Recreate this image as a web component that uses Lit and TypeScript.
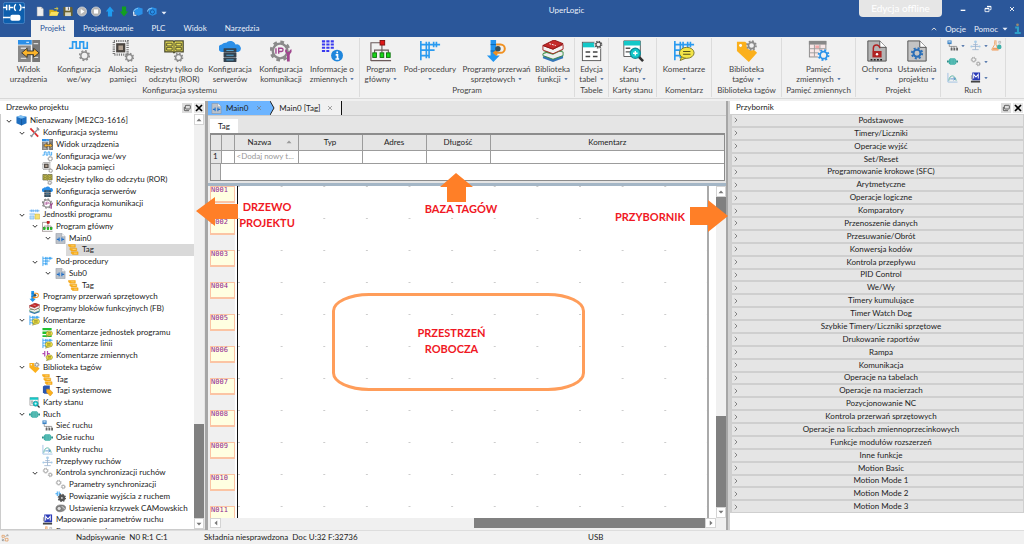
import { LitElement, html, css, svg, nothing } from "lit";
import { customElement, property } from "lit/decorators.js";

const gear = (cx: number, cy: number, r: number, c: string, w = 1.6) => svg`
  <circle cx=${cx} cy=${cy} r=${r} fill="none" stroke=${c} stroke-width=${w}/>
  <circle cx=${cx} cy=${cy} r=${r + w * 0.8} fill="none" stroke=${c} stroke-width=${w}
    stroke-dasharray="${((r + w * 0.8) * Math.PI) / 8} ${((r + w * 0.8) * Math.PI) / 8}"/>`;
const bubble = (x: number, y: number, rx: number, ry: number) => svg`
  <path d="M${x - rx * 0.6} ${y + ry * 0.4}L${x - rx * 0.9} ${y + ry * 1.4}L${x} ${y + ry * 0.9}Z" fill="#f0e040" stroke="#77742c"/>
  <ellipse cx=${x} cy=${y} rx=${rx} ry=${ry} fill="#f3e548" stroke="#77742c"/>
  <path d="M${x - rx * 0.5} ${y - 1.5}h${rx}M${x - rx * 0.5} ${y + 1.5}h${rx}" stroke="#55521c" stroke-width="1.2"/>`;
const ladder = svg`<path d="M2 1v21M2 5h21M2 11h15M2 17h9M8 2v6M11 2v6M16 2v6M19 2v6M8 8v6M11 8v6M8 14v6M11 14v6" fill="none" stroke="#2a9bf0" stroke-width="1.8"/>`;
const tagStack = svg`
  <path d="M1 1h15v6H4L1 4zM4 9h15v6H7l-3-3zM7 17h15v6H10l-3-3z" fill="#fbb01c" stroke="#e89a10"/>
  <path d="M7 4h7M10 12h7M13 20h7" stroke="#fff3c4"/>`;
const docShape = (fill: string) => svg`<path d="M2 1h13l7 7v15H2z" fill=${fill} stroke="#4c4c4c"/><path d="M15 1v7h7" fill="#fff" stroke="#4c4c4c"/>`;
const twoGears = svg`${gear(8, 8, 4, "#9a9a9a", 1.8)}${gear(18, 17, 3, "#9a9a9a", 1.8)}`;

const ICONS: Record<string, unknown> = {
  device: svg`<rect width="15" height="5" y="0" fill="#2b8fe8"/><path d="M9 2.500h3" stroke="#fff"/>
    <rect y="6" width="14" height="18" fill="#888"/><rect x="15.500" y="0" width="8.500" height="24" fill="#787878"/>
    <path d="M17 4h5M17 19h5M3 9h6M3 20h6" stroke="#d8d8d8" stroke-width="1.500"/>
    <path d="M4 14l6-5v3h7V9l6 5-6 5v-3h-7v3z" fill="#fcb42a" stroke="#333"/>`,
  io: svg`<path d="M1 9h4V2h4v7h4V2h4v7h4V2" fill="none" stroke="#2a9bf0" stroke-width="1.800"/>${gear(18, 17, 4, "#8c8c8c", 1.600)}`,
  alloc: svg`<rect x="2" y="1" width="15" height="15" fill="none" stroke="#777" stroke-width="2.600" stroke-dasharray="1.200 1.200"/>
    <rect x="4.500" y="3.500" width="10" height="10" fill="#4a4540"/><rect x="7" y="6" width="5" height="5" fill="#b0a090"/>${gear(19, 19, 3.200, "#8c8c8c", 1.500)}`,
  ror: svg`<path d="M2 1h9l1 1 1-1h9v12h-9l-1 1-1-1H2z" fill="#e9df55" stroke="#4a4a30" stroke-width="1.400"/>
    <path d="M12 2v11M4 3.500h6v3H4zM4 8h6v3H4zM14 3.500h6v3h-6zM14 8h6v3h-6z" fill="none" stroke="#4a4a30"/><circle cx="17" cy="19" r="5.500" fill="#f1f1f1"/>${gear(17, 19, 3.200, "#8c8c8c", 1.500)}`,
  server: svg`<path d="M4 13a4 4 0 01-1-8 5 5 0 015-2 6 6 0 0110 2 4 4 0 013 8z" fill="#2b8fe8"/>
    <rect x="5" y="9" width="14" height="4.800" rx="0.500" fill="#34424f"/><rect x="5" y="14.200" width="14" height="4.800" rx="0.500" fill="#34424f"/><rect x="5" y="19.400" width="14" height="4.600" rx="0.500" fill="#34424f"/>
    <path d="M8 11.400h8M8 16.600h8M8 21.700h8" stroke="#58b5e8"/>`,
  comm: svg`<circle cx="11" cy="12" r="8" fill="none" stroke="#8a8a8a" stroke-width="2.600"/><circle cx="11" cy="12" r="10" fill="none" stroke="#8a8a8a" stroke-width="2.800" stroke-dasharray="4 3.850"/>
    <path d="M6.500 9v6M9.500 15V9h3a1.500 1.500 0 010 3.500h-3" fill="none" stroke="#a0468e" stroke-width="1.500"/>
    <path d="M16.500 10v3l2 2.500v8h3v-8l2-2.500v-3l-2 1v2h-3v-2z" fill="#a0468e"/>`,
  info: svg`<path d="M1 1.500h13M1 5h13M1 8.500h13M1 12h8" stroke="#3a3af0" stroke-width="2.200" stroke-dasharray="3.500 1.300"/>
    <circle cx="17.500" cy="17" r="6.500" fill="#1f86dc"/><path d="M17.700 12.500v2M16 16.200h2v4.500M15.800 20.700h4" stroke="#fff" stroke-width="1.800" fill="none"/>`,
  prog: svg`<path d="M13 5v6M5 14v-3h15v3M13 11v3M1 23V3h10M1 22.500h22" fill="none" stroke="#6a5a5a" stroke-width="1.200"/>
    <rect x="11" y="0.500" width="5" height="5" fill="#e01818" stroke="#801010"/>
    <rect x="3" y="14" width="4" height="5" fill="#17d817" stroke="#0a700a"/><rect x="11" y="14" width="4" height="5" fill="#17d817" stroke="#0a700a"/><rect x="18" y="14" width="4" height="5" fill="#17d817" stroke="#0a700a"/>`,
  sub: ladder,
  intr: svg`<path d="M5 0h6v17h4l-7 7-7-7h4z" fill="#2196f0"/><path d="M5 5h6M5 12h6" stroke="#0c62a8"/>
    <path d="M11 5h5a4.500 4.500 0 010 9h-5M12 11.500l-3 2.500 3 2.500" fill="none" stroke="#f09020" stroke-width="2.200"/><circle cx="13" cy="9.500" r="3" fill="#34505c"/>`,
  books: svg`<path d="M1 18l12-4 10 3v3l-11 4-11-4z" fill="#3476b8"/><path d="M1 15l12-4 10 2v4l-11 4-11-4z" fill="#eee" stroke="#3a8a45"/><path d="M1 13l12-4 10 2-11 5z" fill="#3f9a4c"/>
    <path d="M1 6v5l11 4 11-5V5L12 10z" fill="#f2f2f2" stroke="#a82020"/><path d="M1 6L13 0l10 4-11 6z" fill="#c42a2a" stroke="#8c1414"/><path d="M8 4l7 2" stroke="#fff" stroke-dasharray="2 1"/>`,
  table: svg`<rect x="1.500" y="2.500" width="20" height="20" fill="#fff" stroke="#555"/><rect x="2" y="3" width="19" height="5" fill="#14c8c8"/>
    <path d="M5 13h5M13 13h5M5 18h5M13 18h5" stroke="#444" stroke-width="1.600"/><circle cx="19" cy="5" r="5" fill="#f1f1f1"/>${gear(19, 5, 2.600, "#555", 1.300)}`,
  card: svg`<path d="M2 1h18v17H2z" fill="#fff" stroke="#555"/><rect x="2" y="1" width="18" height="5" fill="#14c8c8"/><path d="M4 9h5M4 13h5" stroke="#555" stroke-width="1.500"/>
    <path d="M18 18l5 5" stroke="#333" stroke-width="2.800"/><circle cx="14.500" cy="14.500" r="5.500" fill="#14c8c8" stroke="#0d8c98" stroke-width="1.400"/><path d="M14.500 12v5M12 14.500h5" stroke="#fff" stroke-width="1.500"/>`,
  comment: svg`${ladder}${bubble(15, 14, 8, 6)}`,
  taglib: svg`<path d="M1 2h9l13 12-9 10L1 12z" fill="#fbb01c"/><circle cx="5" cy="6" r="1.600" fill="#fff"/><circle cx="17" cy="6" r="5.500" fill="#f1f1f1"/>${gear(17, 6, 3.400, "#8a8a8a", 1.800)}`,
  mem: svg`<rect x="1.500" y="1.500" width="18" height="17" fill="#f8e8e8" stroke="#888"/><rect x="1" y="1" width="19" height="4" fill="#888"/>
    <path d="M7 5v13M13 5v13M2 9.500h17M2 14h17" stroke="#999"/><path d="M8 6h4v3H8zM14 10h4v3h-4z" fill="#f2a8a8"/><circle cx="17" cy="16.500" r="6.500" fill="#f1f1f1"/>${gear(17, 16.500, 3.800, "#2a93ea", 2)}`,
  lockdoc: svg`${docShape("#b4b4b4")}<path d="M8 12V9a3.500 3.500 0 017 0" fill="none" stroke="#b02020" stroke-width="1.600"/><rect x="7" y="12" width="10" height="7" fill="#b02424"/><circle cx="12" cy="15.500" r="1.300" fill="#fff"/><path d="M5 21.500h14" stroke="#222" stroke-width="1.600" stroke-dasharray="2 1.500"/>`,
  geardoc: svg`${docShape("#c4c4c4")}${gear(12, 14.500, 3.800, "#2a6fb8", 2.200)}`,
  net: svg`<rect x="1" y="1" width="9" height="8" fill="#3b82c4"/><rect x="3" y="2.500" width="5" height="3" fill="#bcd8f0"/><path d="M5 9v5h16M10 14v3M15 14v3M21 14v3" fill="none" stroke="#777" stroke-width="1.500"/><path d="M8 17h4v6H8zM14 17h4v6h-4zM20 17h4v6h-4z" fill="#666"/>`,
  axis: svg`<path d="M0 10h4v4H0zM20 10h4v4h-4z" fill="#2c8c88"/><path d="M4 8l3-3h10l3 3v8l-3 3H7l-3-3z" fill="#3fb0a8"/><path d="M9 6v12M13 6v12M17 6v12" stroke="#8fd4cf"/>`,
  points: svg`<path d="M2 2v20h21" fill="none" stroke="#8ab4e0" stroke-width="1.600"/><path d="M4 19c1-14 14-14 16 0" fill="none" stroke="#30a090" stroke-width="1.600"/><path d="M7 15h10M14 12l4 3-4 3" fill="none" stroke="#3b82c4" stroke-width="1.600"/>`,
  flow: svg`<circle cx="12" cy="4" r="3" fill="#a8cce8"/><path d="M12 7v14M3 14h18M7 10h10M5 21h14" stroke="#9cb4d0" stroke-width="1.800"/><circle cx="3" cy="14" r="2.200" fill="#a8cce8"/><circle cx="21" cy="14" r="2.200" fill="#a8cce8"/>`,
  gears: twoGears,
  flask: svg`<path d="M7 2h5M8 3v7L2 20v2h14l-5-12V3" fill="none" stroke="#f0a060" stroke-width="2"/><path d="M5 17h8l2 4H3z" fill="#f0a060"/><path d="M17 3h4v4h-4z" fill="none" stroke="#888"/><circle cx="18" cy="15" r="5" fill="#3fb0a8"/>`,
  motor: svg`<path d="M5 1h17v17H5z" fill="#2a3ab8"/><path d="M8 14V5l5 6 5-6v9" fill="none" stroke="#fff" stroke-width="2.200"/><path d="M2 19h20v4H2z" fill="#444"/><path d="M2 7h3v9H2z" fill="#aaa"/>`,
  cube: svg`<path d="M1 4l9-3 13 3v14l-11 5L1 18z" fill="#1f6fc0"/><path d="M1 4l11 4 11-4-13-3z" fill="#7ec0f4"/><path d="M12 8v15" stroke="#0c3f78"/>`,
  tools: svg`<path d="M3 3l17 18" stroke="#e03030" stroke-width="4"/><path d="M21 3L5 20" stroke="#8c949c" stroke-width="3"/><path d="M17 1l5 6M3 18l4 4" stroke="#8c949c" stroke-width="3"/>`,
  units: svg`<path d="M1 4h22M1 11h12M5 1v6M9 1v6M15 1v6M19 1v6" stroke="#58a8f0" stroke-width="1.800"/><path d="M2 15h9v7H2z" fill="#b8dcf8" stroke="#58a8f0"/><path d="M13 11h10v11H13z" fill="#f4e070" stroke="#c8a830"/>`,
  ladderdoc: svg`<path d="M2 1h13l7 7v15H2z" fill="#bcc2ca" stroke="#858b94"/><path d="M15 1v7h7" fill="#fff" stroke="#858b94"/><path d="M4 14h5M15 14h5M9 10v8M15 10v8" stroke="#1f6fc8" stroke-width="2.400"/>`,
  tag: tagStack,
  kunit: svg`<path d="M1 2h20v5H1zM1 10h14v5H1zM1 18h20v4H1z" fill="#20c030"/>${bubble(16, 14, 7, 5.500)}`,
  kvar: svg`<path d="M1 8h5M12 8h5M6 2v12M12 2v12" stroke="#b048b0" stroke-width="2.600"/>${bubble(16, 16, 7, 5.500)}`,
  tagsys: svg`<path d="M2 3l3-2h12v18H5l-3-3z" fill="#2a56b0"/><path d="M10 9h6l8 8-6 7-8-8z" fill="#fbb01c" stroke="#d98c0a"/>`,
  link: svg`<path d="M1 6h4M9 6h4M5 1v10M9 1v10" stroke="#2a9bf0" stroke-width="2"/><circle cx="15" cy="15" r="6" fill="#555"/>${gear(15, 15, 6, "#555", 2.400)}<circle cx="15" cy="15" r="2" fill="#ddd"/>`,
  cam: svg`<path d="M2 12c0-8 10-9 17-7 6 2 5 9 0 12-8 4-17 2-17-5z" fill="#8a8a8a" stroke="#555"/><circle cx="9" cy="12" r="4.500" fill="#ddd" stroke="#444"/><path d="M15 7l6 6" stroke="#ddd" stroke-width="2"/>`,
  logo: svg`<rect x="0.500" y="0.500" width="23" height="23" rx="2" fill="#0d5fae" stroke="#4a84c4"/><path d="M0 6h4M4 3v6M7 3v6M7 6h4M14 2.500a4.500 4.500 0 000 7M18 2.500a4.500 4.500 0 010 7M21 6h3M0 17h8" fill="none" stroke="#fff" stroke-width="1.600"/><rect x="8" y="14" width="11" height="6.500" rx="2" fill="#fff"/>`,
  newdoc: svg`<path d="M5 1h10l5 5v17H5z" fill="#eee" stroke="#aaa"/><path d="M15 1v5h5" fill="#bbb"/>`,
  open: svg`<path d="M1 8h9l2 2h8v12H1z" fill="#d8b018"/><path d="M5 13h19l-4 9H1z" fill="#f8e060"/><path d="M13 5h8M18 2l4 3-4 3" stroke="#f0d838" stroke-width="2" fill="none"/>`,
  save: svg`<path d="M1 1h20l2 2v20H1z" fill="#6a6230"/><rect x="6" y="1" width="11" height="9" fill="#e8e8e8"/><rect x="5" y="14" width="14" height="9" fill="#d8d8c0"/><path d="M13 2v6" stroke="#444" stroke-width="2"/>`,
  play: svg`<circle cx="12" cy="12" r="11" fill="#b8b8b8" stroke="#e4e4e4" stroke-width="1.500"/><path d="M9 6l9 6-9 6z" fill="#fff"/>`,
  stop: svg`<circle cx="12" cy="12" r="11" fill="#b0b0b0" stroke="#e4e4e4" stroke-width="1.500"/><rect x="7" y="7" width="10" height="10" fill="#fff"/>`,
  up: svg`<path d="M12 0l10 12h-5v12H7V12H2z" fill="#1f9cf0"/>`,
  down: svg`<path d="M12 24l10-12h-5V0H7v12H2z" fill="#12a020"/>`,
  cloudA: svg`<path d="M4 6l8-4 11 3v13l-10 4-9-4z" fill="#2a90e8"/><path d="M1 18a11 11 0 0111-13" fill="none" stroke="#7cc0f4" stroke-width="2.500"/><path d="M2 13v8h6" stroke="#fff" stroke-width="2.500" fill="none"/>`,
  cloudB: svg`<path d="M4 6l8-4 11 3v13l-10 4-9-4z" fill="#2a90e8"/><circle cx="13" cy="13" r="5" fill="none" stroke="#134f94" stroke-width="2"/><path d="M1 12a11 11 0 0111-8" fill="none" stroke="#7cc0f4" stroke-width="2.500"/>`,
  float: svg`<rect x="7" y="4" width="15" height="11" rx="2" fill="none" stroke="#444" stroke-width="2.400"/><path d="M4 9v9a2 2 0 002 2h12" fill="none" stroke="#444" stroke-width="2.400"/>`,
  close: svg`<path d="M3 3l18 18M21 3L3 21" stroke="#000" stroke-width="5"/>`,
  thinx: svg`<path d="M4 4l16 16M20 4L4 20" stroke="currentColor" stroke-width="2.600"/>`,
  min: svg`<path d="M5 16h14" stroke="#fff" stroke-width="4"/>`,
  restore: svg`<path d="M9 4h12v10h-4M3 10h12v10H3z" fill="none" stroke="#fff" stroke-width="2.500"/><path d="M9 5h12M3 11h12" stroke="#fff" stroke-width="4"/>`,
  winx: svg`<path d="M4 4l16 16M20 4L4 20" stroke="#fff" stroke-width="3.600"/>`,
  i: svg`<path d="M7 10h6v12M6 22h13" fill="none" stroke="#2f9fc8" stroke-width="4.500"/><circle cx="12" cy="4" r="3" fill="#9a8a70"/>`,
  chevD: svg`<path d="M3 8l9 9 9-9" fill="none" stroke="#333" stroke-width="4"/>`,
  chevR: svg`<path d="M7 3l9 9-9 9" fill="none" stroke="#777" stroke-width="3.500"/>`,
  chevU: svg`<path d="M3 16l9-8 9 8" fill="none" stroke="#ddd" stroke-width="4"/>`,
  triD: svg`<path d="M2 7h20L12 18z" fill="currentColor"/>`,
  triU: svg`<path d="M2 17h20L12 6z" fill="currentColor"/>`,
  triL: svg`<path d="M17 2v20L6 12z" fill="currentColor"/>`,
  triR: svg`<path d="M7 2v20l11-10z" fill="currentColor"/>`,
  status: svg`<path d="M3 4h7v6H3zM13 13h8v8h-8z" fill="none" stroke="#e0904c" stroke-width="2"/><path d="M13 9l7-7M4 20l6-6M17 3h4v4M4 14v6h6" stroke="#8a8a8a" stroke-width="2" fill="none"/>`,
};

const icon = (name: string, cls = "i11") =>
  html`<svg class=${cls} viewBox="0 0 24 24" aria-hidden="true">${ICONS[name]}</svg>`;

type Cmd = { icon: string; a: string; b?: string; menu?: boolean; w: number };
const RIBBON: { title: string; items: Cmd[] }[] = [
  { title: "Konfiguracja systemu", items: [
    { icon: "device", a: "Widok", b: "urządzenia", w: 53 },
    { icon: "io", a: "Konfiguracja", b: "we/wy", w: 48 },
    { icon: "alloc", a: "Alokacja", b: "pamięci", w: 40 },
    { icon: "ror", a: "Rejestry tylko do", b: "odczytu (ROR)", w: 62 },
    { icon: "server", a: "Konfiguracja", b: "serwerów", w: 50 },
    { icon: "comm", a: "Konfiguracja", b: "komunikacji", w: 52 },
    { icon: "info", a: "Informacje o", b: "zmiennych", menu: true, w: 50 }] },
  { title: "Program", items: [
    { icon: "prog", a: "Program", b: "główny", menu: true, w: 38 },
    { icon: "sub", a: "Pod-procedury", menu: true, w: 60 },
    { icon: "intr", a: "Programy przerwań", b: "sprzętowych", menu: true, w: 73 },
    { icon: "books", a: "Biblioteka", b: "funkcji", menu: true, w: 39 }] },
  { title: "Tabele", items: [{ icon: "table", a: "Edycja", b: "tabel", menu: true, w: 29 }] },
  { title: "Karty stanu", items: [{ icon: "card", a: "Karty", b: "stanu", menu: true, w: 43 }] },
  { title: "Komentarz", items: [{ icon: "comment", a: "Komentarze", menu: true, w: 50 }] },
  { title: "Biblioteka tagów", items: [{ icon: "taglib", a: "Biblioteka", b: "tagów", menu: true, w: 65 }] },
  { title: "Pamięć zmiennych", items: [{ icon: "mem", a: "Pamięć", b: "zmiennych", menu: true, w: 69 }] },
  { title: "Projekt", items: [
    { icon: "lockdoc", a: "Ochrona", menu: true, w: 38 },
    { icon: "geardoc", a: "Ustawienia", b: "projektu", menu: true, w: 42 }] },
];

const TREE: [number, string, string, boolean?][] = [
  [0, "cube", "Nienazwany [ME2C3-1616]", true],
  [1, "tools", "Konfiguracja systemu", true],
  [2, "device", "Widok urządzenia"],
  [2, "io", "Konfiguracja we/wy"],
  [2, "alloc", "Alokacja pamięci"],
  [2, "ror", "Rejestry tylko do odczytu (ROR)"],
  [2, "server", "Konfiguracja serwerów"],
  [2, "comm", "Konfiguracja komunikacji"],
  [1, "units", "Jednostki programu", true],
  [2, "prog", "Program główny", true],
  [3, "ladderdoc", "Main0", true],
  [4, "tag", "Tag"],
  [2, "sub", "Pod-procedury", true],
  [3, "ladderdoc", "Sub0", true],
  [4, "tag", "Tag"],
  [1, "intr", "Programy przerwań sprzętowych"],
  [1, "books", "Programy bloków funkcyjnych (FB)"],
  [1, "comment", "Komentarze", true],
  [2, "kunit", "Komentarze jednostek programu"],
  [2, "comment", "Komentarze linii"],
  [2, "kvar", "Komentarze zmiennych"],
  [1, "taglib", "Biblioteka tagów", true],
  [2, "tag", "Tag"],
  [2, "tagsys", "Tagi systemowe"],
  [1, "card", "Karty stanu"],
  [1, "axis", "Ruch", true],
  [2, "net", "Sieć ruchu"],
  [2, "axis", "Osie ruchu"],
  [2, "points", "Punkty ruchu"],
  [2, "flow", "Przepływy ruchów"],
  [2, "gears", "Kontrola synchronizacji ruchów", true],
  [3, "gears", "Parametry synchronizacji"],
  [3, "link", "Powiązanie wyjścia z ruchem"],
  [3, "cam", "Ustawienia krzywek CAMowskich"],
  [2, "motor", "Mapowanie parametrów ruchu"],
  [2, "flask", "Parametry ruchu"],
];

const TOOLBOX = [
  "Podstawowe", "Timery/Liczniki", "Operacje wyjść", "Set/Reset", "Programowanie krokowe (SFC)", "Arytmetyczne",
  "Operacje logiczne", "Komparatory", "Przenoszenie danych", "Przesuwanie/Obrót", "Konwersja kodów",
  "Kontrola przepływu", "PID Control", "We/Wy", "Timery kumulujące", "Timer Watch Dog",
  "Szybkie Timery/Liczniki sprzętowe", "Drukowanie raportów", "Rampa", "Komunikacja", "Operacje na tabelach",
  "Operacje na macierzach", "Pozycjonowanie NC", "Kontrola przerwań sprzętowych",
  "Operacje na liczbach zmiennoprzecinkowych", "Funkcje modułów rozszerzeń", "Inne funkcje", "Motion Basic",
  "Motion Mode 1", "Motion Mode 2", "Motion Mode 3",
];

const base = css`
  * { box-sizing: border-box; }
  button { font: inherit; color: inherit; background: none; border: 0; padding: 0; margin: 0; }
  a { color: inherit; text-decoration: none; }
  svg { display: block; flex: none; }
  .i6 { width: 6px; height: 6px; }
  .i8 { width: 8px; height: 8px; }
  .i11 { width: 11px; height: 11px; }
  .i22 { width: 22px; height: 22px; }
`;

@customElement("ribbon-bar")
export class RibbonBar extends LitElement {
  static styles = [base, css`
    :host { display: flex; height: 62px; background: #f1f1f1; border-bottom: 1px solid #d8d8d8; color: #444; }
    .group { display: flex; flex-direction: column; align-items: center; border-right: 1px solid #dcdcdc; padding: 2px 2px 0; margin: 1px 0; }
    .cmds { display: flex; flex: 1; }
    .cmd { display: flex; flex-direction: column; align-items: center; line-height: 10px; white-space: nowrap; }
    .cmd svg.i22 { margin-bottom: 2px; }
    .line { display: flex; align-items: center; gap: 3px; height: 10px; }
    .arrow { color: #2b579a; width: 4px; height: 4px; }
    .title { line-height: 11px; padding-bottom: 1px; white-space: nowrap; }
    .small { display: grid; grid-template-columns: 23px 21px 12px; align-content: start; row-gap: 5px; padding-left: 4px; }
    .small button { display: flex; align-items: center; gap: 3px; height: 11px; }
  `];
  render() {
    const small = [["net", 1], ["flow", 1], ["flask", 0], ["axis", 0], ["gears", 1], ["", 0], ["points", 0], ["motor", 1]] as const;
    return html`
      ${RIBBON.map((g) => html`<div class="group">
        <div class="cmds">${g.items.map((c) => html`
          <button class="cmd" style="width:${c.w}px">${icon(c.icon, "i22")}
            <span class="line">${c.a}</span>
            <span class="line">${c.b ?? nothing}${c.menu ? icon("triD", "arrow") : nothing}</span>
          </button>`)}</div>
        <div class="title">${g.title}</div>
      </div>`)}
      <div class="group">
        <div class="cmds"><div class="small">${small.map(([n, m]) => n
          ? html`<button aria-label=${n}>${icon(n)}${m ? icon("triD", "arrow") : nothing}</button>`
          : html`<span></span>`)}</div></div>
        <div class="title">Ruch</div>
      </div>`;
  }
}

@customElement("dock-header")
export class DockHeader extends LitElement {
  static styles = [base, css`
    :host { display: flex; align-items: center; height: 13px; background: #fff; padding: 0 1px 0 6px; gap: 2px; }
    span { flex: 1; }
    button { background: #ddd; padding: 1px; }
    button:last-child { background: #e8e8e8; }
  `];
  @property() label = "";
  render() {
    return html`<span>${this.label}</span>
      <button aria-label="Odepnij">${icon("float", "i8")}</button>
      <button aria-label="Zamknij">${icon("close", "i8")}</button>`;
  }
}

@customElement("project-tree")
export class ProjectTree extends LitElement {
  static styles = [base, css`
    :host { display: flex; min-height: 0; overflow: hidden; background: #fff; border-left: 1px solid #ccc; }
    ul { list-style: none; margin: 0; padding: 1px 0 0; flex: 1; height: 102%; display: flex; flex-direction: column; }
    li { flex: 1 1 0; min-height: 0; display: flex; align-items: center; padding-left: calc(var(--level) * 13px + 5px); white-space: nowrap; }
    .twist { width: 8px; display: flex; }
    .label { display: flex; align-items: center; align-self: stretch; gap: 3px; flex: 1; padding-left: 2px; }
    .sel .label { background: #d9d9d9; }
  `];
  render() {
    return html`<ul role="tree">${TREE.map(([lv, ic, text, open], n) => html`
      <li role="treeitem" class=${n === 11 ? "sel" : ""} style="--level:${lv}">
        <span class="twist">${open ? icon("chevD", "i6") : nothing}</span>
        <span class="label">${icon(ic)}${text}</span>
      </li>`)}</ul>`;
  }
}

@customElement("tool-box")
export class ToolBox extends LitElement {
  static styles = [base, css`
    :host { display: block; background: #fff; min-height: 0; overflow: hidden; }
    .list { height: 96%; display: flex; flex-direction: column; background: #cfcfcf; padding: 0 1px 0 2px; }
    button { flex: 1 1 0; min-height: 0; display: flex; align-items: center; background: #e5e5e5; border: solid #cfcfcf; border-width: 1px 0; padding-left: 1px; }
    button span { flex: 1; text-align: center; }
  `];
  render() {
    return html`<div class="list">${TOOLBOX.map((t) => html`<button>${icon("chevR", "i6")}<span>${t}</span></button>`)}</div>`;
  }
}

@customElement("scroll-strip")
export class ScrollStrip extends LitElement {
  static styles = [base, css`
    :host { display: flex; flex-direction: column; width: 10px; background: #f0f0f0; color: #777; }
    :host([horizontal]) { flex-direction: row; width: auto; height: 10px; }
    button { flex: none; width: 10px; height: 11px; display: flex; align-items: center; justify-content: center; background: #fff; border: 1px solid #d4d4d4; }
    :host([horizontal]) button { height: 10px; width: 11px; }
    .part { flex: 1 1 0; }
    .dark { background: #808080; }
  `];
  @property({ type: Boolean, reflect: true }) horizontal = false;
  @property({ attribute: false }) parts: number[] = [];
  render() {
    return html`<button aria-label="Wstecz">${icon(this.horizontal ? "triL" : "triU", "i6")}</button>
      ${this.parts.map((p) => html`<div class="part ${p < 0 ? "dark" : ""}" style="flex-grow:${Math.abs(p)}"></div>`)}
      <button aria-label="Dalej">${icon(this.horizontal ? "triR" : "triD", "i6")}</button>`;
  }
}

@customElement("work-area")
export class WorkArea extends LitElement {
  static styles = [base, css`
    :host { display: flex; flex-direction: column; min-width: 0; min-height: 0; background: #e5e5e5; border: solid #a6a6a6; border-width: 0 2px 0 3px; }
    .docs { display: flex; height: 15px; border-bottom: 1px solid #ccc; }
    .doc { display: flex; align-items: center; gap: 6px; padding: 0 8px 0 4px; color: #222; }
    .doc svg { color: #777; }
    .doc.on { background: #6cb4ff; gap: 4px; padding: 0 8px 0 3px; }
    .doc.on .i6 { margin-left: 4px; }
    .edge { width: 5px; height: 14px; background: #f1f1f1; }
    .doc.off { background: #f1f1f1; border-right: 1px solid #111; }
    .tags { padding: 3px 1px 2px 2px; }
    .sheet { background: #fff; width: 28px; line-height: 14px; text-align: center; }
    .grid { background: #fff; border: 1px solid #8c8c8c; border-top-width: 2px; height: 48px; display: flex; flex-direction: column; }
    table { border-collapse: collapse; table-layout: fixed; width: 100%; }
    th, td { border: 1px solid #9c9c9c; padding: 0 2px; font-weight: normal; overflow: hidden; white-space: nowrap; }
    th { background: #e5e5e5; height: 15px; color: #222; }
    td { height: 13px; color: #999; }
    tr > :first-child { border-left: 0; }
    tr > :last-child { border-right: 0; }
    thead th { border-top: 0; }
    .head { display: flex; align-items: center; justify-content: space-between; padding: 0 4px 0 11px; color: #222; }
    .head svg { color: #999; }
    .c1 { width: 10px; } .c2 { width: 13px; } .c3 { width: 64px; }
    td.num { background: #e5e5e5; color: #222; }
    .rest { width: 10px; flex: 1; background: #e5e5e5; border-right: 1px solid #9c9c9c; }
    .split { height: 3px; background: #a4b6c6; }
    .body { flex: 1; min-height: 0; display: grid; grid-template-columns: 1fr 10px; grid-template-rows: 1fr 10px; background: #f0f0f0; padding: 0 0 2px 2px; }
    .rungs { display: flex; flex: 1; min-height: 0; overflow: hidden; background: #fff; padding-right: 7px; }
    .gutter { width: 25px; background: #f0f0f0; height: 100%; }
    .gutter div { height: 32px; }
    .gutter span { display: block; height: 17px; border: 1px solid #fbc4a4; border-bottom-width: 2px; background: #ffffe1; color: #902890; line-height: 7px; font-family: "DejaVu Sans Mono", monospace; font-size: 7px; }
    .ladder { flex: 1; margin-left: 2px; border-left: 1px solid #111; border-right: 2px solid #aaa; }
    .dots { height: 100%; background-image: linear-gradient(to right, #ccc 2px, transparent 2px);
      background-size: calc(100% / 11) 32px; position: relative; }
    .dots::after { content: ""; position: absolute; inset: 0; background: repeating-linear-gradient(transparent 0 1px, #fff 1px 32px); }
    .note, .room { position: absolute; font: bold 11px/16px Lato, sans-serif; color: #f01824; text-align: center; }
    .n1 { left: 0; top: 13px; width: 58px; }
    .n2 { left: 178px; top: 15px; width: 90px; }
    .n3 { right: 22px; top: 23px; width: 76px; }
    .room { left: 94px; top: 107px; width: 253px; height: 98px; border: 3px solid #ff9d5a; border-radius: 37px / 18px; display: flex; align-items: center; justify-content: center; padding: 0 14px 3px 0; }
    .ptr { position: absolute; fill: #ff7f27; }
    .p1 { left: -42px; top: 11px; width: 42px; height: 29px; }
    .p2 { left: 202px; top: -13px; width: 33px; height: 29px; }
    .p3 { right: -18px; top: 14px; width: 38px; height: 32px; }
    .over { position: relative; display: flex; min-height: 0; }
    .marks { position: absolute; left: 28px; right: 6px; top: 0; height: 0; }
  `];
  render() {
    const nums = Array.from({ length: 11 }, (_, n) => "N" + String(n + 1).padStart(3, "0"));
    return html`
      <div class="docs">
        <button class="doc on">${icon("ladderdoc")}Main0 ${icon("thinx", "i6")}</button>
        <svg class="edge" viewBox="0 0 5 14"><path d="M0 0l4 7-4 7z" fill="#6cb4ff"/><path d="M0 0l4 7-4 7" fill="none" stroke="#222"/></svg>
        <button class="doc off">Main0 [Tag] ${icon("thinx", "i6")}</button>
      </div>
      <div class="tags">
        <div class="sheet">Tag</div>
        <div class="grid">
          <table>
            <colgroup><col class="c1"><col class="c2"><col class="c3"><col class="c3"><col class="c3"><col class="c3"><col></colgroup>
            <thead><tr><th></th><th></th><th><span class="head">Nazwa ${icon("triU", "i6")}</span></th><th>Typ</th><th>Adres</th><th>Długość</th><th>Komentarz</th></tr></thead>
            <tbody><tr><td class="num">1</td><td></td><td>&lt;Dodaj nowy t...</td><td></td><td></td><td></td><td></td></tr></tbody>
          </table>
          <div class="rest"></div>
        </div>
      </div>
      <div class="split"></div>
      <div class="body">
        <div class="over">
          <div class="rungs">
            <div class="gutter">${nums.map((n) => html`<div><span>${n}</span></div>`)}</div>
            <div class="ladder"><div class="dots"></div></div>
          </div>
          <div class="marks">
            <div class="note n1">DRZEWO PROJEKTU</div>
            <div class="note n2">BAZA TAGÓW</div>
            <div class="note n3">PRZYBORNIK</div>
            <div class="room">PRZESTRZEŃ<br>ROBOCZA</div>
            <svg class="ptr p1" viewBox="0 0 42 29"><path d="M0 14L19 0v7h23v15H19v7z"/></svg>
            <svg class="ptr p2" viewBox="0 0 33 29"><path d="M16 0l17 14h-7v15H7V14H0z"/></svg>
            <svg class="ptr p3" viewBox="0 0 38 32"><path d="M0 7h18V0l20 16-20 16v-7H0z"/></svg>
          </div>
        </div>
        <scroll-strip .parts=${[-18, 200, -90]}></scroll-strip>
        <scroll-strip horizontal .parts=${[252, -231]}></scroll-strip>
      </div>`;
  }
}

@customElement("app-root")
export class AppRoot extends LitElement {
  static styles = [base, css`
    :host { display: flex; flex-direction: column; height: 100vh; overflow: hidden; background: #f0f0f0; color: #222; font: 8px/11px Lato, "Open Sans", sans-serif; }
    header { background: #2b579a; color: #e8eef8; display: grid; grid-template-columns: 31px 1fr; }
    .logo { padding: 2px 3px; }
    .bars { display: flex; flex-direction: column; }
    .top { display: grid; grid-template-columns: 1fr auto 1fr; height: 20px; }
    .quick { display: flex; gap: 4px; padding: 3px 0 0 4px; }
    .quick .i11 { width: 10px; }
    .quick .i6 { margin-top: 3px; }
    .name { padding: 5px 0 0 78px; }
    .sys { display: flex; justify-content: flex-end; gap: 17px; padding-right: 9px; }
    .sys button { height: 17px; }
    .badge { background: #e6e6e6; color: #fff; border-radius: 0 0 4px 4px; width: 83px; height: 17px; text-align: center; font-size: 10px; line-height: 17px; }
    nav { display: flex; height: 17px; align-items: stretch; line-height: 16px; }
    nav a { padding: 0 9px; }
    nav .on { background: #f1f1f1; color: #2b579a; }
    .right { margin-left: auto; display: flex; align-items: center; gap: 4px; padding-right: 1px; }
    .right a { padding: 0 0 0 4px; }
    main { flex: 1; min-height: 0; display: grid; grid-template-columns: 205px 1fr 296px; padding-top: 2px; }
    .dock { display: flex; flex-direction: column; min-height: 0; min-width: 0; }
    .dock tool-box { flex: 1; }
    .row { display: flex; flex: 1; min-height: 0; border-bottom: 1px solid #ccc; padding-right: 1px; background: #e5e5e5; }
    .row project-tree { flex: 1; }
    .right-dock { border-left: 2px solid #d0d0d0; }
    footer { display: flex; align-items: center; height: 14px; background: #f1f1f1; border-top: 1px solid #ddd; }
    .s1 { width: 76px; } .s2 { width: 128px; } .s3 { width: 384px; }
    .s1 svg { margin-left: 1px; }
  `];
  render() {
    return html`
      <header>
        <div class="logo">${icon("logo", "i22")}</div>
        <div class="bars">
          <div class="top">
            <div class="quick">${["newdoc", "open", "save", "play", "stop", "up", "down", "cloudA", "cloudB"].map((n) => html`<button aria-label=${n}>${icon(n)}</button>`)}<button aria-label="Więcej">${icon("triD", "i6")}</button></div>
            <div class="name">UperLogic</div>
            <div class="sys"><div class="badge">Edycja offline</div>
              <button aria-label="Minimalizuj">${icon("min", "i8")}</button><button aria-label="Przywróć">${icon("restore", "i8")}</button><button aria-label="Zamknij">${icon("winx", "i6")}</button></div>
          </div>
          <nav>
            <a class="on" href="#">Projekt</a><a href="#">Projektowanie</a><a href="#">PLC</a><a href="#">Widok</a><a href="#">Narzędzia</a>
            <div class="right">${icon("chevU", "i6")}<a href="#">Opcje</a><a href="#">Pomoc</a>${icon("triD", "i6")}${icon("i", "i11")}</div>
          </nav>
        </div>
      </header>
      <ribbon-bar></ribbon-bar>
      <main>
        <section class="dock">
          <dock-header label="Drzewko projektu"></dock-header>
          <div class="row"><project-tree></project-tree><scroll-strip .parts=${[299, -94]}></scroll-strip></div>
        </section>
        <work-area></work-area>
        <section class="dock right-dock">
          <dock-header label="Przybornik"></dock-header>
          <tool-box></tool-box>
        </section>
      </main>
      <footer><span class="s1">${icon("status", "i8")}</span><span class="s2">Nadpisywanie&nbsp; N0 R:1 C:1</span><span class="s3">Składnia niesprawdzona&nbsp; Doc U:32 F:32736</span><span>USB</span></footer>`;
  }
}
